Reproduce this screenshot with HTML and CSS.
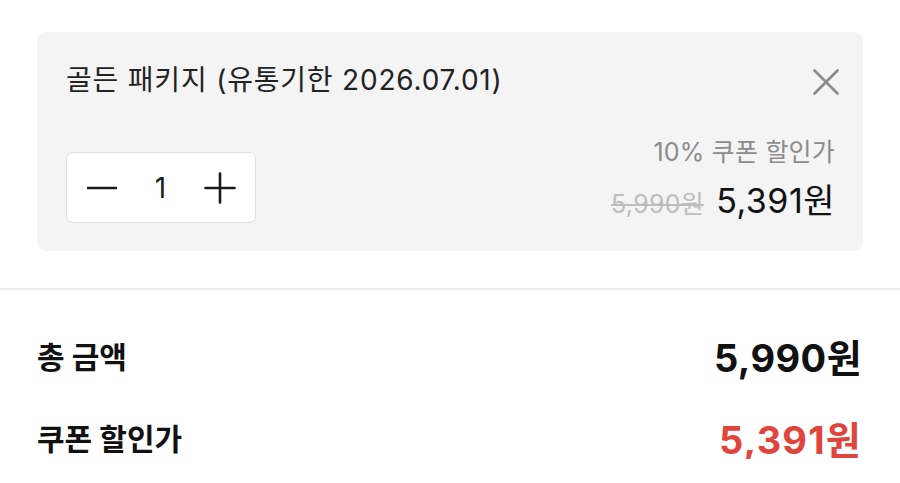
FILE: index.html
```html
<!DOCTYPE html>
<html lang="ko">
<head>
<meta charset="utf-8">
<link rel="stylesheet" href="styles.css">
</head>
<body>
<div class="card">
  <div class="card-head">
    <div class="title">골든 패키지 (유통기한 2026.07.01)</div>
    <svg class="close" width="26" height="26" viewBox="0 0 26 26"><path d="M1.5 1.5 L24.5 24.5 M24.5 1.5 L1.5 24.5" stroke="#8a8a8a" stroke-width="2.6" stroke-linecap="round" fill="none"/></svg>
  </div>
  <div class="card-body">
    <div class="qty">
      <svg width="30" height="30" viewBox="0 0 30 30"><path d="M1 15 H29" stroke="#1a1a1a" stroke-width="2.6" stroke-linecap="round"/></svg>
      <span class="qty-num">1</span>
      <svg width="32" height="32" viewBox="0 0 32 32"><path d="M1.5 16 H30.5 M16 1.5 V30.5" stroke="#1a1a1a" stroke-width="2.6" stroke-linecap="round"/></svg>
    </div>
    <div class="prices">
      <div class="coupon-label">10% 쿠폰 할인가</div>
      <div class="price-row"><span class="old">5,990원</span><span class="new">5,391원</span></div>
    </div>
  </div>
</div>
<div class="divider"></div>
<div class="summary">
  <div class="row"><span class="label">총 금액</span><span class="value">5,990원</span></div>
  <div class="row"><span class="label">쿠폰 할인가</span><span class="value red">5,391원</span></div>
</div>
</body>
</html>
```

FILE: styles.css
```css
* { box-sizing: border-box; }
html, body { margin: 0; padding: 0; background: #fff; }
body {
  font-family: "Inter", "Noto Sans CJK KR", sans-serif;
  color: #1a1a1a;
  width: 900px;
  overflow: hidden;
}
.card {
  margin: 32px 37px 0 37px;
  background: #f4f4f4;
  border-radius: 9px;
  padding: 30px 28px 28px 29px;
}
.card-head {
  display: flex;
  justify-content: space-between;
  align-items: center;
  height: 36px;
}
.title {
  font-size: 28px;
  line-height: 36px;
  color: #222;
  letter-spacing: 0.8px;
}
.close { margin-right: -4px; margin-top: 3px; }
.card-body {
  margin-top: 39px;
  height: 86px;
  display: flex;
  justify-content: space-between;
  align-items: flex-end;
}
.qty {
  width: 190px;
  height: 71px;
  background: #fff;
  border: 1px solid #dedede;
  border-radius: 7px;
  display: flex;
  align-items: center;
  justify-content: space-between;
  padding: 0 19px 0 20px;
}
.qty-num { font-size: 28px; color: #1a1a1a; }
.prices { text-align: right; }
.coupon-label {
  font-size: 25px;
  line-height: 30px;
  height: 30px;
  margin-bottom: 12px;
  color: #8c8c8c;
  letter-spacing: 0.2px;
}
.price-row {
  display: flex;
  align-items: baseline;
  justify-content: flex-end;
  gap: 12px;
  height: 44px;
  line-height: 44px;
}
.old {
  font-size: 25px;
  color: #bdbdbd;
  text-decoration: line-through;
  text-decoration-thickness: 2px;
  letter-spacing: 0.3px;
}
.new {
  font-size: 34px;
  color: #111;
  letter-spacing: 0.5px;
}
.divider {
  margin-top: 37px;
  height: 2px;
  background: #ededed;
}
.summary {
  padding: 43px 38px 0 37px;
  display: flex;
  flex-direction: column;
  gap: 38px;
}
.row {
  display: flex;
  justify-content: space-between;
  align-items: center;
  height: 44px;
}
.label {
  font-size: 30px;
  font-weight: 700;
  color: #111;
}
.value {
  font-size: 38px;
  font-weight: 700;
  color: #111;
  letter-spacing: 0.4px;
}
.value.red { color: #e1443b; letter-spacing: 1.2px; }
```
